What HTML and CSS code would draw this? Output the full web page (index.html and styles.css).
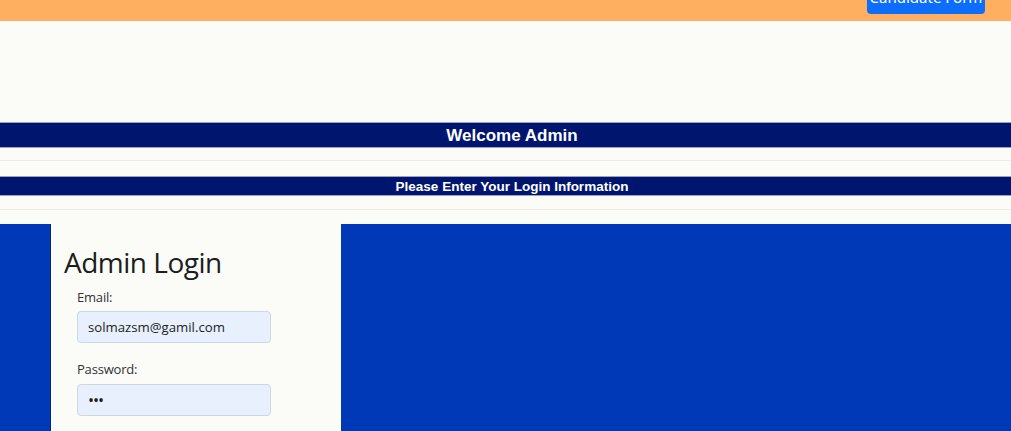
FILE: index.html
```html
<!DOCTYPE html>
<html>
<head>
<meta charset="utf-8">
<link rel="stylesheet" href="styles.css">
</head>
<body>
<header class="topbar">
  <button class="candidate-btn">Candidate Form</button>
</header>
<div class="spacer"></div>
<div class="banner welcome">Welcome Admin</div>
<hr class="rule rule-a">
<div class="banner please">Please Enter Your Login Information</div>
<hr class="rule rule-b">
<section class="stage">
  <div class="card">
    <h1 class="card-title">Admin Login</h1>
    <form class="login-form">
      <label class="field-label">Email:</label>
      <div class="field-input">solmazsm@gamil.com</div>
      <label class="field-label pw">Password:</label>
      <div class="field-input dots">•••</div>
    </form>
  </div>
</section>
</body>
</html>
```
FILE: styles.css
```css
html, body {
  margin: 0;
  padding: 0;
}
body {
  background: #fbfcf7;
  width: 1011px;
  height: 431px;
  overflow: hidden;
  font-family: "Liberation Sans", Arial, sans-serif;
}
.topbar {
  height: 21px;
  background: #ffaf5f;
  display: flex;
  justify-content: flex-end;
  align-items: flex-end;
  padding-right: 26px;
  overflow: hidden;
}
.candidate-btn {
  width: 118px;
  height: 38px;
  margin-bottom: 7px;
  background: #0d6efd;
  color: #fff;
  border: none;
  border-radius: 4px;
  font-family: "Noto Sans", sans-serif;
  font-size: 15px;
  display: flex;
  align-items: flex-end;
  justify-content: center;
  line-height: 1;
  padding: 0 0 9px;
  box-sizing: border-box;
}
.spacer {
  height: 101px;
}
.banner {
  background: #00156e;
  color: #fff;
  font-weight: bold;
  text-align: center;
  border-top: 1px solid #9aa2c6;
  border-bottom: 1px solid #9aa2c6;
  box-sizing: border-box;
  padding-left: 13px;
}
.welcome {
  height: 26px;
  font-size: 17px;
  line-height: 25px;
}
.please {
  height: 20px;
  font-size: 13.5px;
  line-height: 19px;
}
.rule {
  border: none;
  border-top: 1px solid #ebece6;
  margin: 0;
}
.rule-a {
  margin-top: 12px;
  margin-bottom: 15px;
}
.rule-b {
  margin-top: 13px;
  margin-bottom: 14px;
}
.stage {
  background: #0039b7;
  height: 207px;
  padding-left: 51px;
  display: flex;
}
.card {
  width: 290px;
  background: #fbfcf7;
  box-shadow: -1px 0 0 #0a2470;
  padding: 21px 0 0 13px;
  box-sizing: border-box;
}
.card-title {
  margin: 0;
  font-family: "Open Sans", "Noto Sans", sans-serif;
  font-weight: 500;
  font-size: 28px;
  line-height: 34px;
  color: #1b1d21;
  letter-spacing: -0.5px;
}
.login-form {
  padding-left: 13px;
  display: flex;
  flex-direction: column;
  align-items: flex-start;
}
.field-label {
  font-family: "Open Sans", "Noto Sans", sans-serif;
  font-size: 13px;
  color: #2f3237;
  line-height: 20px;
  margin-top: 8px;
  margin-bottom: 4px;
  letter-spacing: -0.2px;
}
.field-label.pw {
  margin-top: 16px;
  margin-bottom: 5px;
}
.field-input {
  width: 194px;
  height: 32px;
  box-sizing: border-box;
  background: #e8f0fe;
  border: 1px solid #cdd6e4;
  border-radius: 4px;
  padding: 0 10px;
  font-family: "Open Sans", "Noto Sans", sans-serif;
  font-size: 13.2px;
  line-height: 30px;
  color: #1b1d21;
}
.dots {
  font-size: 16px;
  letter-spacing: -1px;
}
```
